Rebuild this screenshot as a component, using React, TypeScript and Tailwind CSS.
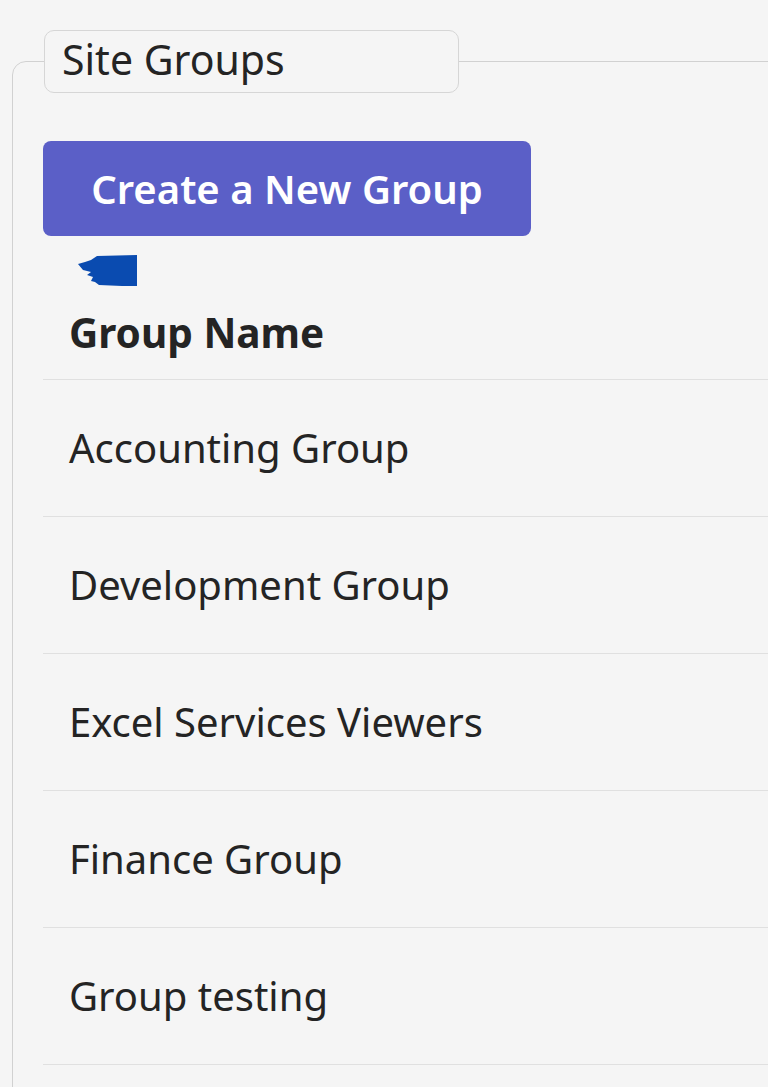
const groups = [
  "Accounting Group",
  "Development Group",
  "Excel Services Viewers",
  "Finance Group",
  "Group testing",
];

function Scribble() {
  return (
    <svg width="60" height="33" viewBox="0 0 60 33" className="block">
      <polygon
        fill="#0a4bb0"
        points="20,2 60,1 60,32 45,32 22,31 18,28 14,27 16,23 10,21 14,18 6,16 1,10 8,8 14,6"
      />
    </svg>
  );
}

export default function App() {
  return (
    <div className="h-[1087px] overflow-hidden bg-[#f5f5f5] pl-[12px] pt-[30px] font-['Noto_Sans',sans-serif] text-[#242424]">
      <fieldset className="w-[800px] min-h-[1200px] rounded-tl-[14px] border border-[#d1d1d1]">
        <legend className="ml-[31px] box-border h-[63px] w-[415px] rounded-[10px] border border-[#d6d6d6] px-[17px] text-[41px] leading-[56px]">
          Site Groups
        </legend>

        <div className="pl-[30px]">
          <button
            type="button"
            className="mt-[48px] flex h-[95px] w-[488px] items-center justify-center rounded-[8px] bg-[#5b5fc7] text-[40px] font-semibold text-white"
          >
            Create a New Group
          </button>

          <div className="ml-[34px] mt-[18px]">
            <Scribble />
          </div>

          <div className="flex h-[93px] items-center border-b border-[#e0e0e0] pl-[26px] text-[40.5px] font-bold">
            Group Name
          </div>

          {groups.map((name) => (
            <div
              key={name}
              className="flex h-[137px] items-center border-b border-[#e0e0e0] pl-[26px] text-[40px]"
            >
              {name}
            </div>
          ))}
        </div>
      </fieldset>
    </div>
  );
}
